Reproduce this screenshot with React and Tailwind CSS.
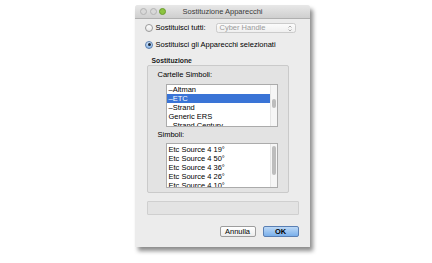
import React from 'react';

const Radio = ({ checked }) => (
  <div
    className={`w-[8px] h-[8px] rounded-full border flex items-center justify-center shrink-0 ${
      checked
        ? 'border-[#5a7fb0] bg-linear-to-b from-[#d3e5fa] to-[#8fb9ea]'
        : 'border-[#9a9a9a] bg-linear-to-b from-[#ffffff] to-[#e6e6e6]'
    }`}
  >
    {checked && <div className="w-[3px] h-[3px] rounded-full bg-[#1d2a3a]" />}
  </div>
);

const ListBox = ({ items, selected = -1, height, thumbPad, thumbHeight, padTop }) => (
  <div className={`flex border border-[#ababab] bg-white ${height}`}>
    <div className={`flex-1 overflow-hidden ${padTop}`}>
      {items.map((it, i) => (
        <div
          key={i}
          className={`h-[9px] leading-[9px] pl-[2px] whitespace-nowrap ${
            i === selected ? 'bg-[#3a74d6] text-white' : 'text-[#000]'
          }`}
        >
          {it}
        </div>
      ))}
    </div>
    <div className={`w-[7px] bg-[#f6f6f6] border-l border-[#e6e6e6] flex flex-col items-center ${thumbPad}`}>
      <div className={`w-[4px] rounded-full bg-[#bdbdbd] ${thumbHeight}`} />
    </div>
  </div>
);

export default function App() {
  return (
    <div className="w-[432px] h-[263px] bg-white pl-[135px] pt-[5px] overflow-hidden font-['Liberation_Sans',Arial,sans-serif] text-[7.5px] text-[#000]">
      <div className="w-[175px] h-[242px] bg-[#ececec] flex flex-col rounded-t-[3px] shadow-[3px_4px_4px_rgba(0,0,0,0.45)]">
        {/* title bar */}
        <div className="h-[14px] shrink-0 grid grid-cols-[1fr_auto_1fr] items-center px-[5px] rounded-t-[3px] bg-linear-to-b from-[#e8e8e8] to-[#cfcfcf] border-b border-[#b0b0b0]">
          <div className="flex items-center gap-[2.5px]">
            <div className="w-[7px] h-[7px] rounded-full bg-[#d8d8d8] border border-[#b3b3b3]" />
            <div className="w-[7px] h-[7px] rounded-full bg-[#d8d8d8] border border-[#b3b3b3]" />
            <div className="w-[7px] h-[7px] rounded-full bg-[#8cc440] border border-[#6b9c30]" />
          </div>
          <div className="text-[#3a3a3a]">Sostituzione Apparecchi</div>
          <div />
        </div>

        {/* radio 1 */}
        <div className="mt-[4px] h-[10px] flex items-center pl-[10px]">
          <Radio />
          <span className="ml-[2.5px]">Sostituisci tutti:</span>
          <div className="ml-[10px] w-[80px] h-[10.5px] rounded-[2.5px] border border-[#cbcbcb] bg-linear-to-b from-[#fbfbfb] to-[#efefef] flex items-center justify-between pl-[3px] pr-[3px] text-[#9c9c9c]">
            <span>Cyber Handle</span>
            <svg width="4" height="7" viewBox="0 0 4 7">
              <path d="M0.5 2.5 L2 1 L3.5 2.5" fill="none" stroke="#9c9c9c" strokeWidth="0.8" />
              <path d="M0.5 4.5 L2 6 L3.5 4.5" fill="none" stroke="#9c9c9c" strokeWidth="0.8" />
            </svg>
          </div>
        </div>

        {/* radio 2 */}
        <div className="mt-[6.5px] h-[10px] flex items-center pl-[10px]">
          <Radio checked />
          <span className="ml-[2.5px]">Sostituisci gli Apparecchi selezionati</span>
        </div>

        {/* group */}
        <div className="mt-[7px] pl-[16.5px] h-[8px] leading-[8px] text-[6.8px] font-semibold text-[#222]">Sostituzione</div>
        <div className="ml-[11.5px] w-[142px] h-[128px] border border-[#cacaca] bg-[#e3e3e3] rounded-[2px] pl-[10px] flex flex-col">
          <div className="mt-[5px] h-[8px] leading-[8px]">Cartelle Simboli:</div>
          <div className="mt-[5px] ml-[8px] w-[112px]">
            <ListBox
              items={['–Altman', '–ETC', '–Strand', 'Generic ERS', '–Strand Century']}
              selected={1}
              height="h-[43px]"
              padTop="pt-[0.5px]"
              thumbPad="pt-[14px]"
              thumbHeight="h-[9px]"
            />
          </div>
          <div className="mt-[4px] h-[8px] leading-[8px]">Simboli:</div>
          <div className="mt-[4px] ml-[8px] w-[112px]">
            <ListBox
              items={['Etc Source 4 19°', 'Etc Source 4 50°', 'Etc Source 4 36°', 'Etc Source 4 26°', 'Etc Source 4 10°']}
              height="h-[45px]"
              padTop="pt-[1.5px]"
              thumbPad="pt-[2px]"
              thumbHeight="h-[29px]"
            />
          </div>
        </div>

        {/* empty field */}
        <div className="mt-[8.5px] ml-[11.5px] w-[152px] h-[14px] border border-[#cfcfcf] bg-[#e3e3e3] rounded-[1px]" />

        {/* buttons */}
        <div className="mt-[11px] flex justify-end gap-[7px] pr-[11.5px]">
          <div className="w-[36px] h-[11px] flex items-center justify-center border border-[#9d9d9d] rounded-[2px] bg-linear-to-b from-[#ffffff] to-[#ececec]">
            Annulla
          </div>
          <div className="w-[36px] h-[11px] flex items-center justify-center border border-[#5a7fb3] rounded-[2px] bg-linear-to-b from-[#bcd8f6] to-[#79afea] font-semibold">
            OK
          </div>
        </div>
      </div>
    </div>
  );
}
